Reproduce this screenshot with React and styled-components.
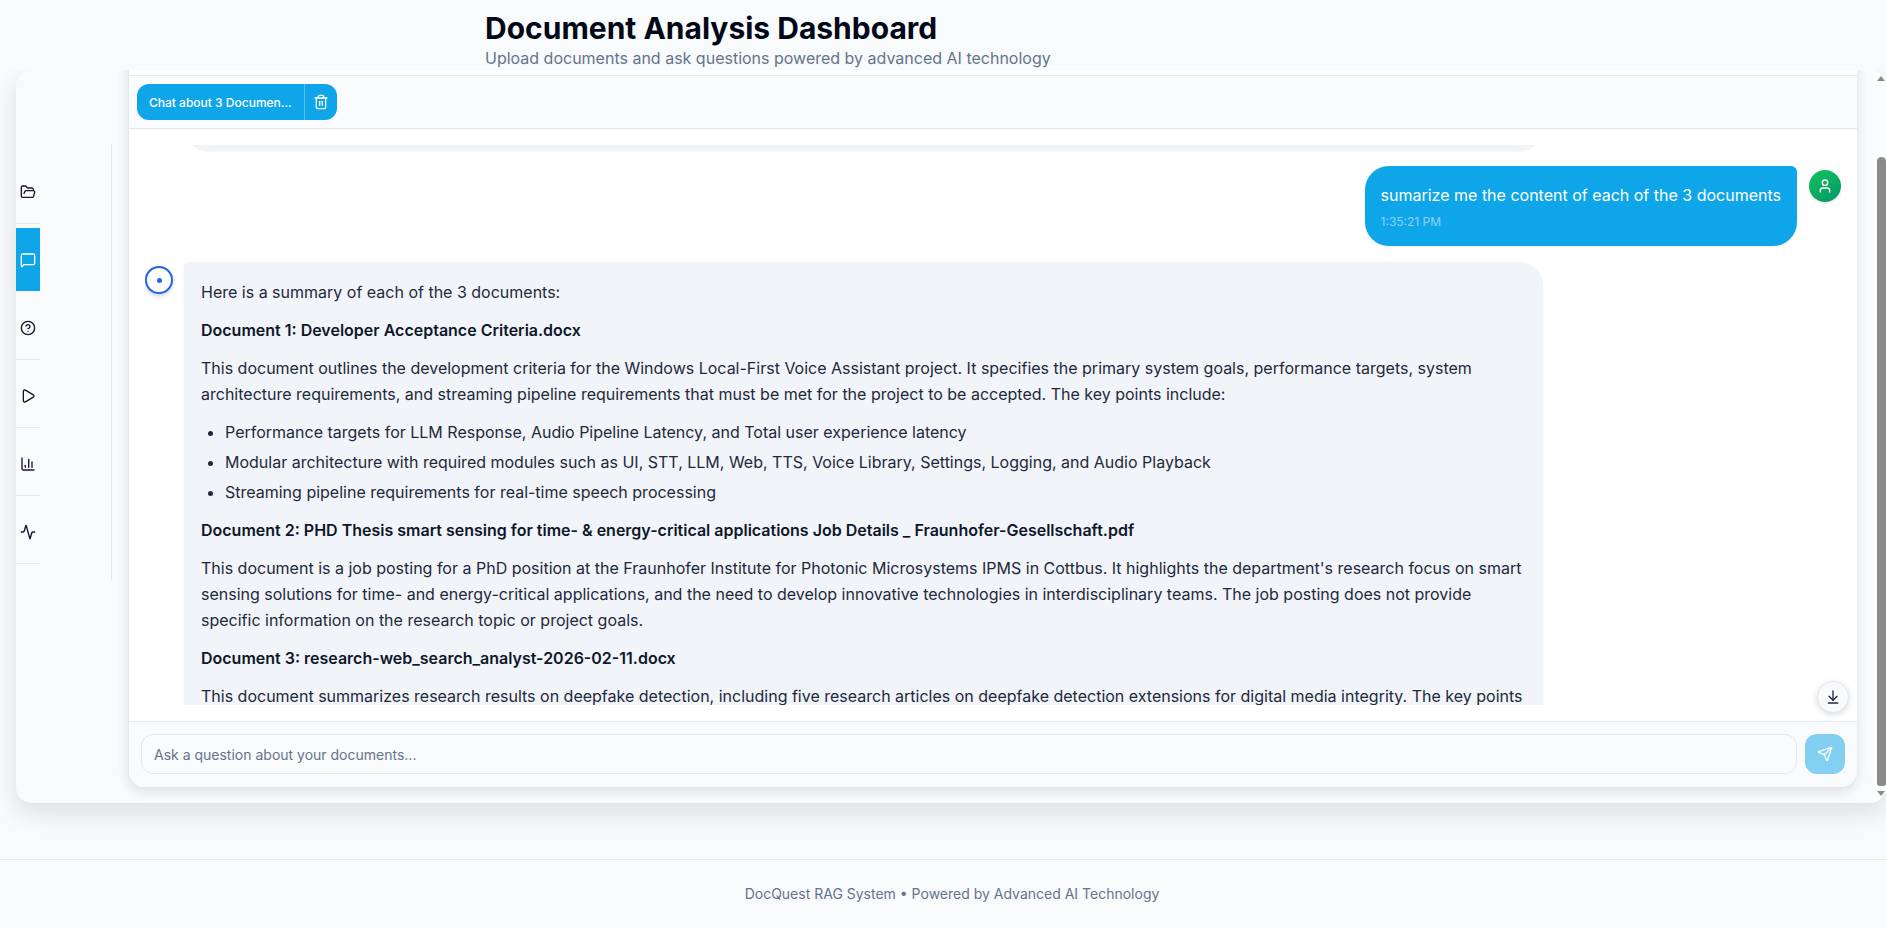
import React, { useLayoutEffect, useRef } from 'react';
import styled, { createGlobalStyle } from 'styled-components';
import {
    FolderOpen,
    MessageSquare,
    CircleHelp,
    Play,
    ChartColumn,
    Activity,
    Trash2,
    User,
    ArrowDownToLine,
    Send,
} from 'lucide-react';

const GlobalStyle = createGlobalStyle`
    html, body {
        margin: 0;
        height: 100%;
        overflow: hidden;
        background: #f9fafc;
    }
    body {
        font-family: Inter, "Liberation Sans", sans-serif;
        color: #1e293b;
    }
    * {
        box-sizing: border-box;
    }
`;

const Page = styled.div`
    height: 928px;
    display: flex;
    flex-direction: column;
    overflow: hidden;
`;

const Header = styled.header`
    position: relative;
    z-index: 1;
    height: 70px;
    padding: 10px 0 0 485px;
    flex: none;
    background: #f9fafc;
`;

const Title = styled.h1`
    margin: 0;
    font-size: 30px;
    line-height: 36px;
    font-weight: 700;
    color: #020817;
`;

const Subtitle = styled.p`
    margin: 0;
    font-size: 16px;
    line-height: 24px;
    color: #64748b;
`;

const Main = styled.main`
    flex: none;
    height: 733px;
    padding-left: 16px;
`;

const CardFrame = styled.div`
    position: relative;
    height: 100%;
    overflow: hidden;
    background: #f9fafc;
    border-radius: 16px;
    box-shadow: 0 10px 25px rgba(15, 23, 42, 0.12);
`;

const CardScroll = styled.div`
    height: 100%;
    overflow-y: auto;
    scrollbar-width: none;
`;

const Rail = styled.div`
    position: absolute;
    top: 0;
    right: 0;
    bottom: 0;
    width: 13px;
    padding-left: 4px;
    display: flex;
    flex-direction: column;
    background: #fbfcfd;
`;

const RailArrow = styled.span`
    flex: none;
    width: 0;
    height: 0;
    margin: ${({ $up }) => ($up ? '6px 0 0' : '5px 0 7px')};
    border-left: 4.5px solid transparent;
    border-right: 4.5px solid transparent;
    border-bottom: ${({ $up }) => ($up ? '5px solid #8a8a8a' : '0')};
    border-top: ${({ $up }) => ($up ? '0' : '5px solid #8a8a8a')};
`;

const RailThumb = styled.span`
    flex: 1;
    margin-top: 76px;
    border-radius: 5px 5px 3px 3px;
    background: #8a8a8a;
`;

const Workspace = styled.div`
    display: flex;
    align-items: flex-start;
    padding-bottom: 16px;
`;

const Sidebar = styled.nav`
    flex: none;
    width: 96px;
    margin-top: 159px;
    padding: 16px 0;
    border-right: 1px solid #e2e8f0;
`;

const NavItem = styled.button`
    display: flex;
    align-items: center;
    justify-content: center;
    width: 24px;
    height: 64px;
    margin: 0 0 4px;
    padding: 0;
    border: 0;
    border-bottom: 1px solid ${({ $active }) => ($active ? 'transparent' : '#e2e8f0')};
    background: ${({ $active }) => ($active ? '#0ea5e9' : 'transparent')};
    background-clip: padding-box;
    color: ${({ $active }) => ($active ? '#ffffff' : '#0f172a')};

    &:last-child {
        margin-bottom: 0;
    }
`;

const ChatPanel = styled.section`
    flex: none;
    position: relative;
    width: 1729px;
    margin-left: 16px;
    border-left: 1px solid #e2e8f0;
    border-radius: 0 0 16px 16px;
    background: #ffffff;
    box-shadow: 0 4px 12px rgba(15, 23, 42, 0.12);
    overflow: hidden;
`;

const TabStrip = styled.div`
    height: 91px;
    background: #ffffff;
    border-bottom: 1px solid #e2e8f0;
`;

const ChatTabs = styled.div`
    height: 53px;
    padding: 8px;
    display: flex;
    align-items: flex-start;
    background: #fbfcfe;
    border-bottom: 1px solid #e2e8f0;
`;

const ChatTab = styled.div`
    display: flex;
    align-items: center;
    height: 36px;
    border-radius: 12px;
    background: #0ea5e9;
    color: #ffffff;
    font-size: 12px;
    font-weight: 450;
`;

const ChatTabLabel = styled.span`
    width: 167px;
    padding-left: 12px;
    white-space: nowrap;
`;

const ChatTabDelete = styled.button`
    display: flex;
    align-items: center;
    justify-content: center;
    width: 33px;
    height: 36px;
    padding: 0;
    border: 0;
    border-left: 1px solid rgba(255, 255, 255, 0.3);
    background: transparent;
    color: #ffffff;
`;

const MessagesPane = styled.div`
    padding: 16px;
    background: #ffffff;
`;

const MessagesScroller = styled.div`
    height: 560px;
    overflow: hidden;
    display: flex;
    flex-direction: column;
`;

const Row = styled.div`
    display: flex;
    flex: none;
    align-items: flex-start;
    justify-content: ${({ $user }) => ($user ? 'flex-end' : 'flex-start')};
    gap: ${({ $user }) => ($user ? '12px' : '11px')};
    margin-bottom: 16px;
`;

const BotAvatar = styled.div`
    flex: none;
    display: flex;
    align-items: center;
    justify-content: center;
    width: 28px;
    height: 28px;
    margin-top: 4px;
    border: 2px solid #2563eb;
    border-radius: 50%;
    background: #ffffff;
    box-shadow: 0 2px 4px rgba(15, 23, 42, 0.2);
`;

const BotDot = styled.span`
    width: 5px;
    height: 5px;
    border-radius: 50%;
    background: #2563eb;
`;

const UserAvatar = styled.div`
    flex: none;
    display: flex;
    align-items: center;
    justify-content: center;
    width: 32px;
    height: 32px;
    margin-top: 4px;
    border-radius: 50%;
    background: linear-gradient(150deg, #14c15f, #059669);
    box-shadow: 0 1px 3px rgba(15, 23, 42, 0.15);
    color: #ffffff;
`;

const BotBubble = styled.div`
    width: 1359px;
    min-height: ${({ $earlier }) => ($earlier ? '120px' : '0')};
    padding: 16px;
    border: 1px solid #f1f4f9;
    border-radius: 6px 24px 24px 24px;
    background: #f1f4f9;
    box-shadow: 0 1px 2px rgba(15, 23, 42, 0.08);
    font-size: 16px;
    line-height: 26px;
    color: #1e293b;
`;

const UserBubble = styled.div`
    padding: 16px;
    border-radius: 24px 6px 24px 24px;
    background: #0ea5e9;
    box-shadow: 0 1px 2px rgba(15, 23, 42, 0.08);
    font-size: 16px;
    line-height: 26px;
    color: #ffffff;
`;

const Time = styled.div`
    margin-top: 6px;
    font-size: 12px;
    line-height: 16px;
    opacity: 0.5;
`;

const Para = styled.p`
    margin: 0 0 12px;
`;

const Strong = styled.strong`
    font-weight: 600;
    color: #0f172a;
`;

const Bullets = styled.ul`
    margin: 0 0 12px;
    padding-left: 24px;
`;

const Bullet = styled.li`
    margin-bottom: 4px;

    &:last-child {
        margin-bottom: 0;
    }
`;

const JumpButton = styled.button`
    position: absolute;
    right: 8px;
    bottom: 74px;
    display: flex;
    align-items: center;
    justify-content: center;
    width: 32px;
    height: 32px;
    padding: 0;
    border: 1px solid #e2e8f0;
    border-radius: 50%;
    background: #f8fafc;
    color: #1e293b;
    box-shadow: 0 2px 6px rgba(15, 23, 42, 0.15);
`;

const Composer = styled.form`
    height: 66px;
    padding: 12px;
    display: flex;
    gap: 8px;
    background: #f9fafc;
    border-top: 1px solid #e2e8f0;
`;

const Input = styled.input`
    flex: 1;
    height: 40px;
    padding: 0 12px;
    border: 1px solid #e2e8f0;
    border-radius: 12px;
    background: #f8fafc;
    font-family: inherit;
    font-size: 14px;
    color: #1e293b;

    &::placeholder {
        color: #64748b;
        opacity: 1;
    }
`;

const SendButton = styled.button`
    flex: none;
    display: flex;
    align-items: center;
    justify-content: center;
    width: 40px;
    height: 40px;
    padding: 0;
    border: 0;
    border-radius: 12px;
    background: #0ea5e9;
    color: #ffffff;
    opacity: 0.5;
`;

const Footer = styled.footer`
    margin-top: 56px;
    flex: 1;
    border-top: 1px solid #e2e8f0;
    padding: 24px 0 0 18px;
    text-align: center;
    font-size: 14px;
    line-height: 20px;
    color: #64748b;
`;

const navIcons = [FolderOpen, MessageSquare, CircleHelp, Play, ChartColumn, Activity];

export default function App() {
    const cardRef = useRef(null);
    const listRef = useRef(null);
    const answerRef = useRef(null);

    useLayoutEffect(() => {
        cardRef.current.scrollTop = 85;
        // last answer starts 117px below the top of the message list
        listRef.current.scrollTop = answerRef.current.offsetTop - listRef.current.offsetTop - 117;
    }, []);

    return (
        <Page>
            <GlobalStyle />
            <Header>
                <Title>Document Analysis Dashboard</Title>
                <Subtitle>Upload documents and ask questions powered by advanced AI technology</Subtitle>
            </Header>
            <Main>
                <CardFrame>
                    <CardScroll ref={cardRef}>
                        <Workspace>
                            <Sidebar>
                                {navIcons.map((Icon, i) => (
                                    <NavItem key={i} $active={i === 1}>
                                        <Icon size={16} />
                                    </NavItem>
                                ))}
                            </Sidebar>
                            <ChatPanel>
                                <TabStrip />
                                <ChatTabs>
                                    <ChatTab>
                                        <ChatTabLabel>Chat about 3 Documen...</ChatTabLabel>
                                        <ChatTabDelete>
                                            <Trash2 size={16} />
                                        </ChatTabDelete>
                                    </ChatTab>
                                </ChatTabs>
                                <MessagesPane>
                                    <MessagesScroller ref={listRef}>
                                        <Row>
                                            <BotAvatar>
                                                <BotDot />
                                            </BotAvatar>
                                            <BotBubble $earlier />
                                        </Row>
                                        <Row $user>
                                            <UserBubble>
                                                sumarize me the content of each of the 3 documents
                                                <Time>1:35:21 PM</Time>
                                            </UserBubble>
                                            <UserAvatar>
                                                <User size={16} />
                                            </UserAvatar>
                                        </Row>
                                        <Row ref={answerRef}>
                                            <BotAvatar>
                                                <BotDot />
                                            </BotAvatar>
                                            <BotBubble>
                                                <Para>Here is a summary of each of the 3 documents:</Para>
                                                <Para>
                                                    <Strong>Document 1: Developer Acceptance Criteria.docx</Strong>
                                                </Para>
                                                <Para>
                                                    This document outlines the development criteria for the Windows Local-First Voice Assistant project. It specifies the primary system goals, performance targets, system architecture requirements, and streaming pipeline requirements that must be met for the project to be accepted. The key points include:
                                                </Para>
                                                <Bullets>
                                                    <Bullet>Performance targets for LLM Response, Audio Pipeline Latency, and Total user experience latency</Bullet>
                                                    <Bullet>Modular architecture with required modules such as UI, STT, LLM, Web, TTS, Voice Library, Settings, Logging, and Audio Playback</Bullet>
                                                    <Bullet>Streaming pipeline requirements for real-time speech processing</Bullet>
                                                </Bullets>
                                                <Para>
                                                    <Strong>Document 2: PHD Thesis smart sensing for time- &amp; energy-critical applications Job Details _ Fraunhofer-Gesellschaft.pdf</Strong>
                                                </Para>
                                                <Para>
                                                    This document is a job posting for a PhD position at the Fraunhofer Institute for Photonic Microsystems IPMS in Cottbus. It highlights the department's research focus on smart sensing solutions for time- and energy-critical applications, and the need to develop innovative technologies in interdisciplinary teams. The job posting does not provide specific information on the research topic or project goals.
                                                </Para>
                                                <Para>
                                                    <Strong>Document 3: research-web_search_analyst-2026-02-11.docx</Strong>
                                                </Para>
                                                <Para>
                                                    This document summarizes research results on deepfake detection, including five research articles on deepfake detection extensions for digital media integrity. The key points
                                                </Para>
                                            </BotBubble>
                                        </Row>
                                    </MessagesScroller>
                                </MessagesPane>
                                <JumpButton>
                                    <ArrowDownToLine size={16} />
                                </JumpButton>
                                <Composer>
                                    <Input placeholder="Ask a question about your documents..." />
                                    <SendButton type="button">
                                        <Send size={16} />
                                    </SendButton>
                                </Composer>
                            </ChatPanel>
                        </Workspace>
                    </CardScroll>
                    <Rail>
                        <RailArrow $up />
                        <RailThumb />
                        <RailArrow />
                    </Rail>
                </CardFrame>
            </Main>
            <Footer>DocQuest RAG System • Powered by Advanced AI Technology</Footer>
        </Page>
    );
}
